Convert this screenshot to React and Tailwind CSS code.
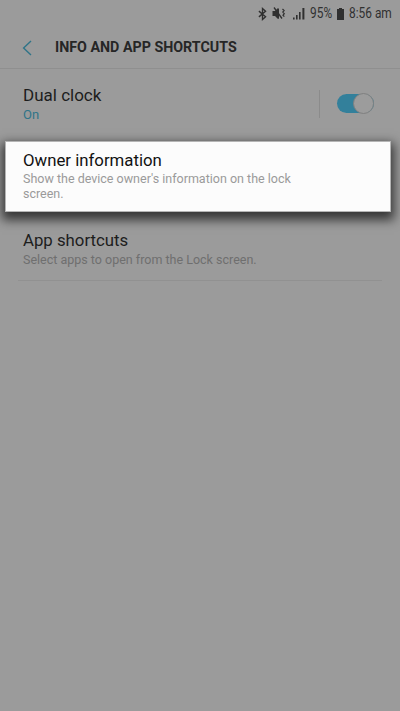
import React from 'react';

const StatusBar = () => (
  <div className="flex h-[27px] items-center justify-end pr-[7px] text-[14px] text-[#303030]">
    {/* bluetooth */}
    <svg width="9" height="14" viewBox="0 0 10 14" fill="none" stroke="#303030" strokeWidth="1.5" className="mr-[5px]">
      <path d="M1 3.8 8.4 10 5 13V1l3.4 3L1 10.2" />
    </svg>
    {/* sound off */}
    <svg width="14" height="13" viewBox="0 0 14 13" fill="#303030" className="mr-[7px]">
      <path d="M0.5 4h2.5l3-3 1 1v9.5l-1 .5-3-3H.5z" />
      <path d="M2 .5l8 11" stroke="#303030" strokeWidth="1.3" />
      <path d="M10.5 2l1.6 1.6-1.3 1.5 1.5 1.6-1.3 1.5 1.3 1.5" fill="none" stroke="#303030" strokeWidth="1.2" />
    </svg>
    {/* signal */}
    <svg width="12" height="13" viewBox="0 0 12 13" fill="#303030" className="mr-[5px]">
      <rect x="0" y="10.5" width="1.6" height="2" />
      <rect x="3" y="8" width="1.6" height="4.5" />
      <rect x="6" y="5" width="1.6" height="7.5" />
      <rect x="9.4" y="1" width="2" height="11.5" />
    </svg>
    <span className="mr-[4px] w-[23px] origin-left scale-x-[0.85] whitespace-nowrap">95%</span>
    <svg width="7" height="12" viewBox="0 0 7 12" fill="#303030" className="mr-[5px]">
      <path d="M2 0h3v1h2v11H0V1h2z" />
    </svg>
    <span className="w-[44px] origin-left scale-x-[0.85] whitespace-nowrap">8:56 am</span>
  </div>
);

const Header = () => (
  <div className="flex h-[42px] items-center border-b border-[#8f8f8f] pt-[1px]">
    <svg width="10" height="16" viewBox="0 0 10 16" fill="none" stroke="#2f7488" strokeWidth="1.4" className="ml-[22px]">
      <path d="M9 1 1.6 8 9 15" />
    </svg>
    <h1 className="ml-[23px] origin-left scale-x-[0.92] whitespace-nowrap text-[15.5px] font-bold text-[#262626]">
      INFO AND APP SHORTCUTS
    </h1>
  </div>
);

const Toggle = () => (
  <div className="-mt-[3px] flex items-center">
    <div className="h-[28px] w-px bg-[#8b8b8b]" />
    <div className="relative ml-[17px] h-[19px] w-[37px] rounded-full bg-[#33809b]">
      <div className="absolute right-0 top-[-1px] h-[21px] w-[21px] rounded-full border border-[#808080] bg-[#9c9c9c]" />
    </div>
  </div>
);

export default function App() {
  return (
    <div className="min-h-[711px] bg-[#9b9b9b] font-['Roboto',sans-serif]">
      <StatusBar />
      <Header />

      <div className="flex h-[72px] items-center justify-between pl-[23px] pr-[26px]">
        <div className="-mt-[2px]">
          <div className="text-[17px] leading-[22px] text-[#1d1d1d]">Dual clock</div>
          <div className="text-[13px] leading-[18px] text-[#2f7488]">On</div>
        </div>
        <Toggle />
      </div>

      <div className="relative mx-[5px] h-[71px] w-[386px] border border-[#b5b5b5] bg-[#fcfcfc] pl-[17px] pt-[7px] shadow-[0_5px_10px_3px_rgba(0,0,0,0.65)]">
        <div className="text-[16.8px] leading-[22px] text-[#111111]">Owner information</div>
        <div className="w-[290px] text-[12.5px] leading-[15px] text-[#9a9a9a]">
          Show the device owner's information on the lock screen.
        </div>
      </div>

      <div className="mx-[18px] h-[69px] border-b border-[#919191] pl-[5px] pt-[17px]">
        <div className="text-[16.8px] leading-[22px] text-[#1d1d1d]">App shortcuts</div>
        <div className="text-[12.5px] leading-[18px] text-[#6f6f6f]">Select apps to open from the Lock screen.</div>
      </div>
    </div>
  );
}
